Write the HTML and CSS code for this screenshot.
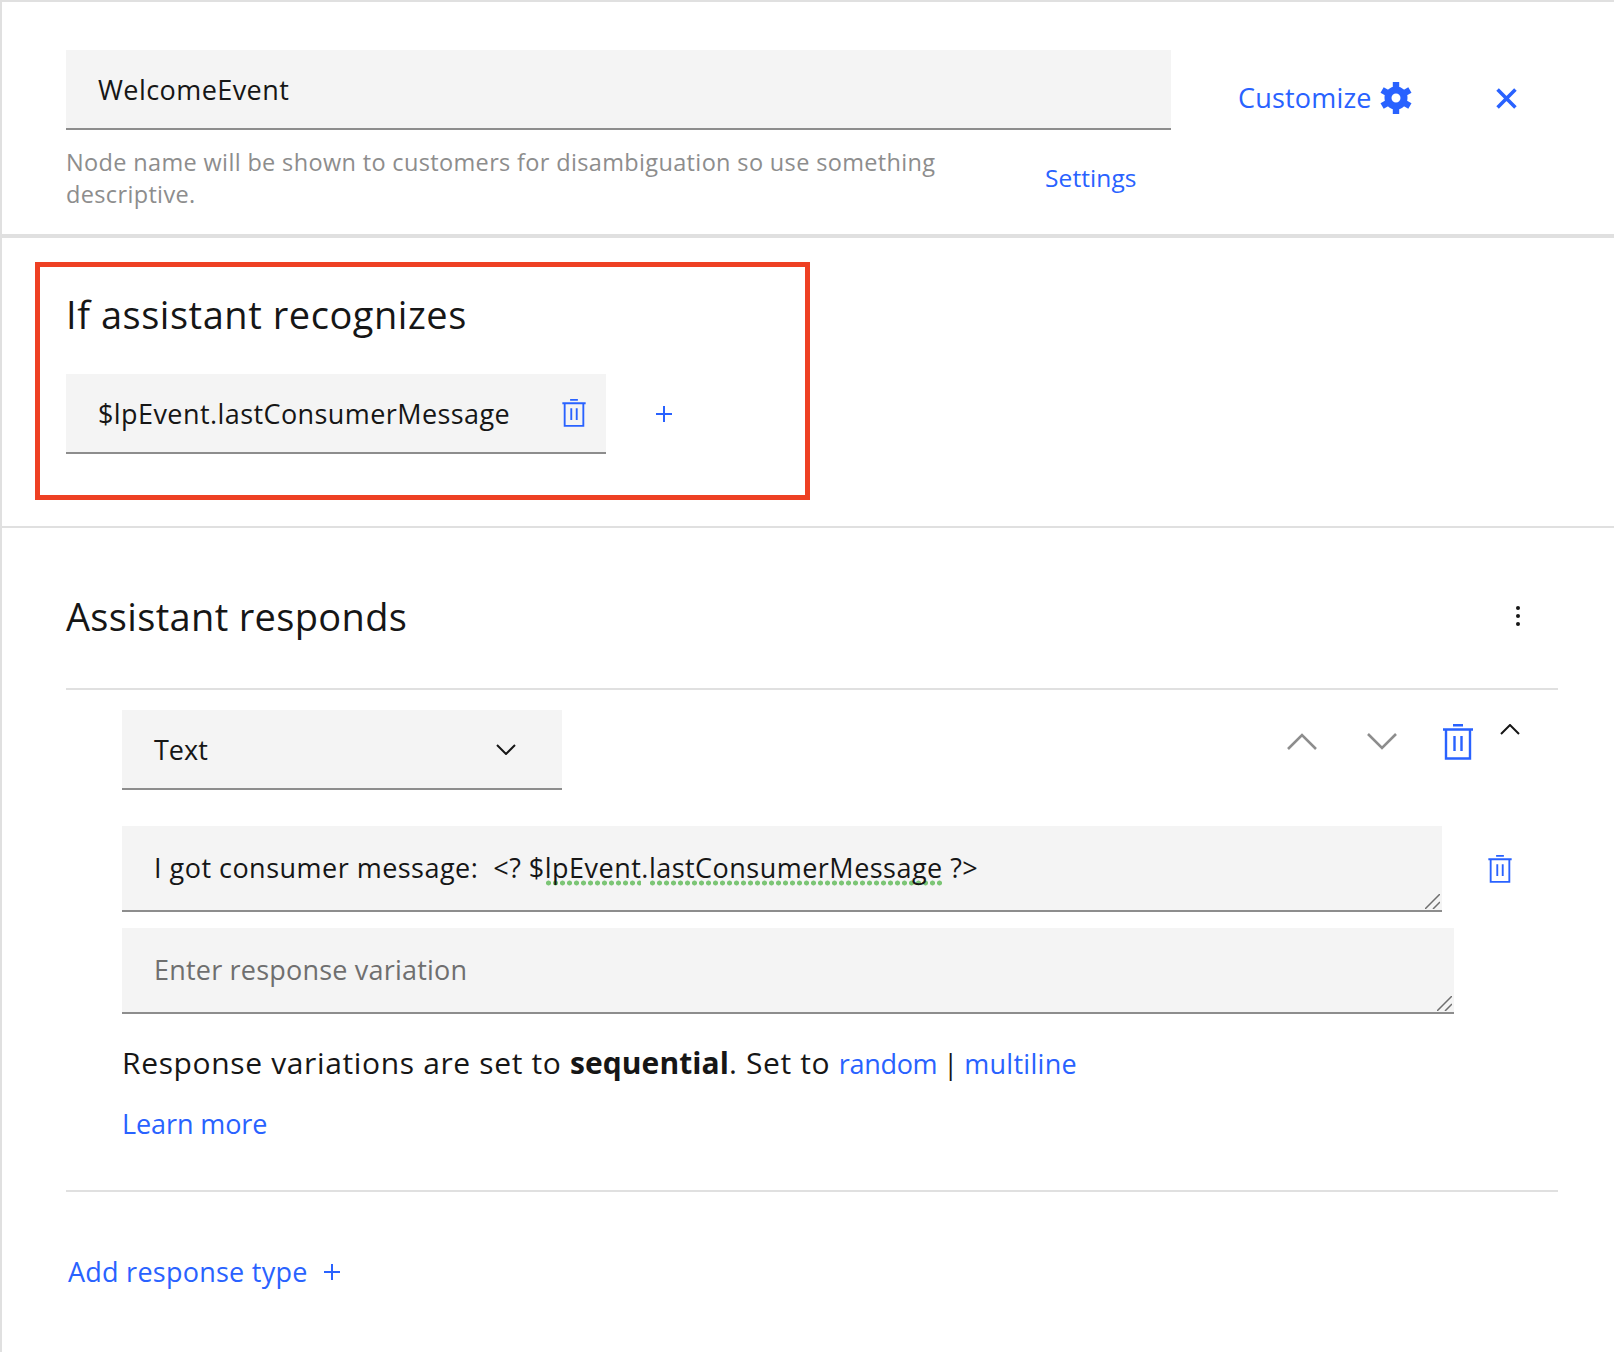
FILE: index.html
```html
<!DOCTYPE html>
<html lang="en">
<head>
<meta charset="utf-8">
<title>WelcomeEvent</title>
<link rel="stylesheet" href="styles.css">
</head>
<body>
<svg class="sprites" width="0" height="0" aria-hidden="true">
  <symbol id="trash" viewBox="0 0 30 36">
    <path d="M10 1.2h10M0 5.5h30M3 5.5V34.5h24V5.5M11.5 12V27M18.5 12V27" fill="none" stroke="currentColor" stroke-width="2.4"/>
  </symbol>
  <symbol id="grip" viewBox="0 0 15 15">
    <path d="M0 15L15 0M8 15l7-7" fill="none" stroke="currentColor" stroke-width="1.5"/>
  </symbol>
</svg>
<main class="page">
  <header class="head">
    <div class="name-col">
      <div class="field name-field">WelcomeEvent</div>
      <div class="hint-row">
        <p class="hint">Node name will be shown to customers for disambiguation so use something descriptive.</p>
        <a class="settings">Settings</a>
      </div>
    </div>
    <div class="head-actions">
      <a class="customize">Customize</a>
      <svg class="gear" viewBox="0 0 32 32" fill="none" stroke="currentColor">
        <circle cx="16" cy="16" r="8" stroke-width="7"/>
        <path stroke-width="6.400" d="M16 0v8M16 24v8M2.100 8l7 4M22.900 20l7 4M29.900 8l-7 4M9.100 20l-7 4"/>
      </svg>
      <svg class="close" viewBox="0 0 20 20"><path d="M1.500 1.500l17 17M18.500 1.500l-17 17" fill="none" stroke="currentColor" stroke-width="3.400"/></svg>
    </div>
  </header>

  <section class="recognizes">
    <div class="red-box">
      <h2 class="title title-if">If assistant recognizes</h2>
      <div class="cond-row">
        <div class="field cond-field">
          <span>$lpEvent.lastConsumerMessage</span>
          <svg class="trash-sm"><use href="#trash"/></svg>
        </div>
        <svg class="plus" viewBox="0 0 16 16"><path d="M8 0v16M0 8h16" fill="none" stroke="currentColor" stroke-width="2"/></svg>
      </div>
    </div>
  </section>

  <section class="responds">
    <div class="responds-head">
      <h2 class="title title-as">Assistant responds</h2>
      <svg class="kebab" viewBox="0 0 6 22"><circle cx="3" cy="3" r="2"/><circle cx="3" cy="11" r="2"/><circle cx="3" cy="19" r="2"/></svg>
    </div>
    <div class="item">
      <div class="type-row">
        <div class="field select">
          <span>Text</span>
          <svg class="select-caret" viewBox="0 0 20 11"><path d="M1 1l9 9 9-9" fill="none" stroke="currentColor" stroke-width="2"/></svg>
        </div>
        <div class="type-actions">
          <svg class="move" viewBox="0 0 30 17"><path d="M1 16L15 2l14 14" fill="none" stroke="currentColor" stroke-width="2.600"/></svg>
          <svg class="move" viewBox="0 0 30 17"><path d="M1 1l14 14L29 1" fill="none" stroke="currentColor" stroke-width="2.600"/></svg>
          <svg class="trash-lg"><use href="#trash"/></svg>
          <svg class="collapse" viewBox="0 0 20 11"><path d="M1 10l9-9 9 9" fill="none" stroke="currentColor" stroke-width="2"/></svg>
        </div>
      </div>
      <div class="variation-row">
        <div class="area-wrap">
          <div class="field area area-first">I got consumer message:&nbsp; &lt;? $<span class="spell">lpEvent</span>.<span class="spell">lastConsumerMessage</span> ?&gt;</div>
          <svg class="grip"><use href="#grip"/></svg>
        </div>
        <svg class="trash-sm trash-row"><use href="#trash"/></svg>
      </div>
      <div class="area-wrap area-wrap-second">
        <textarea class="field area area-second" placeholder="Enter response variation"></textarea>
        <svg class="grip"><use href="#grip"/></svg>
      </div>
      <p class="mode">Response variations are set to <b class="mode-strong">sequential</b>. Set to <a class="mode-link link-random">random</a><span class="sep">|</span><a class="mode-link link-multi">multiline</a></p>
      <p class="learn"><a>Learn more</a></p>
    </div>
    <a class="add-type"><span>Add response type</span><svg class="plus plus-add" viewBox="0 0 16 16"><path d="M8 0v16M0 8h16" fill="none" stroke="currentColor" stroke-width="2"/></svg></a>
  </section>
</main>
</body>
</html>
```
FILE: styles.css
```css
* { box-sizing: border-box; }
html, body { margin: 0; background: #fff; }
body {
  font-family: "Open Sans", "Noto Sans", sans-serif;
  color: #161616;
  font-size: 27px;
}
.sprites { position: absolute; }
.page {
  height: 1352px;
  border-top: 2px solid #e0e0e0;
  border-left: 2px solid #e0e0e0;
  overflow: hidden;
}
a { color: #2962ff; }
p, h2 { margin: 0; }
.field {
  background: #f4f4f4;
  border-bottom: 2px solid #8d8d8d;
  padding-left: 32px;
  display: flex;
  align-items: center;
}

.head {
  height: 236px;
  border-bottom: 4px solid #e0e0e0;
  padding: 48px 0 0 64px;
  display: flex;
}
.name-col { width: 1105px; }
.name-field { height: 80px; letter-spacing: 0.43px; }
.hint-row { display: flex; margin-top: 16px; }
.hint {
  width: 880px;
  font-size: 23.500px;
  line-height: 32px;
  letter-spacing: 0.35px;
  color: #8d8d8d;
}
.settings { margin: 16px 0 0 99px; font-size: 24.500px; line-height: 32px; letter-spacing: 0.1px; }
.head-actions {
  display: flex;
  align-items: center;
  height: 32px;
  margin: 32px 0 0 67px;
  color: #2962ff;
}
.customize { font-size: 27px; letter-spacing: 0.2px; margin-bottom: 1px; }
.gear { width: 32px; height: 32px; margin-left: 8px; }
.close { width: 21px; height: 21px; margin-left: 84px; }

.recognizes {
  height: 290px;
  border-bottom: 2px solid #e0e0e0;
  padding: 24px 0 0 33px;
}
.red-box {
  width: 775px;
  height: 238px;
  border: 5px solid #ee4023;
  padding: 24px 0 0 26px;
}
.title { font-size: 38px; line-height: 46px; font-weight: 400; }
.title-if { letter-spacing: 0.54px; }
.title-as { letter-spacing: 0.34px; }
.cond-row { display: flex; align-items: center; margin-top: 37px; }
.cond-field { width: 540px; height: 80px; justify-content: space-between; padding-right: 20px; letter-spacing: 0.42px; }
.trash-sm { width: 24px; height: 28px; color: #2962ff; }
.plus { width: 16px; height: 16px; color: #2962ff; margin-left: 50px; }

.responds { padding-left: 64px; }
.responds-head {
  width: 1492px;
  height: 162px;
  border-bottom: 2px solid #e0e0e0;
  display: flex;
  justify-content: space-between;
  padding: 65px 37px 0 0;
}
.kebab { width: 6px; height: 22px; margin-top: 12px; fill: #161616; }
.item {
  width: 1492px;
  height: 502px;
  padding: 20px 0 0 56px;
  border-bottom: 2px solid #e0e0e0;
}
.type-row { display: flex; height: 80px; }
.select { width: 440px; justify-content: space-between; padding-right: 46px; }
.select-caret { width: 20px; height: 11px; }
.type-actions { display: flex; margin-left: 725px; padding-top: 14px; }
.move { width: 30px; height: 17px; margin: 9px 50px 0 0; color: #8d8d8d; }
.trash-lg { width: 30px; height: 36px; color: #2962ff; margin-left: -4px; }
.collapse { width: 20px; height: 11px; margin-left: 27px; color: #161616; }
.variation-row { display: flex; align-items: center; margin-top: 36px; }
.area-wrap { position: relative; }
.area-wrap-second { margin-top: 16px; width: 1332px; }
.grip { position: absolute; right: 2px; bottom: 3px; width: 15px; height: 15px; color: #6f6f6f; }
.area { height: 86px; }
.area-first { width: 1320px; display: block; line-height: 84px; white-space: pre; letter-spacing: 0.48px; }
.trash-row { margin-left: 46px; }
.area-second {
  display: block;
  width: 1332px;
  padding: 24px 0 0 32px;
  border-width: 0 0 2px;
  border-style: solid;
  font: inherit;
  line-height: 36px;
  letter-spacing: 0.2px;
  outline: none;
  resize: none;
}
.area-second::placeholder { color: #6f6f6f; opacity: 1; }
.spell {
  background: radial-gradient(circle, #7cc576 2.200px, transparent 2.800px) left bottom / 7px 6px repeat-x;
}
.mode { margin-top: 28px; font-size: 30px; line-height: 42px; letter-spacing: 0.64px; }
.mode-strong { letter-spacing: 0.08px; }
.mode-link { font-size: 27px; }
.link-random { letter-spacing: -0.3px; }
.link-multi { letter-spacing: 0.3px; }
.sep { margin: 0 6px; letter-spacing: 0; font-size: 27px; }
.learn { margin-top: 20px; line-height: 38px; letter-spacing: -0.1px; }
.add-type { display: flex; align-items: center; margin: 61px 0 0 2px; letter-spacing: 0.25px; }
.plus-add { margin-left: 16px; }
```
